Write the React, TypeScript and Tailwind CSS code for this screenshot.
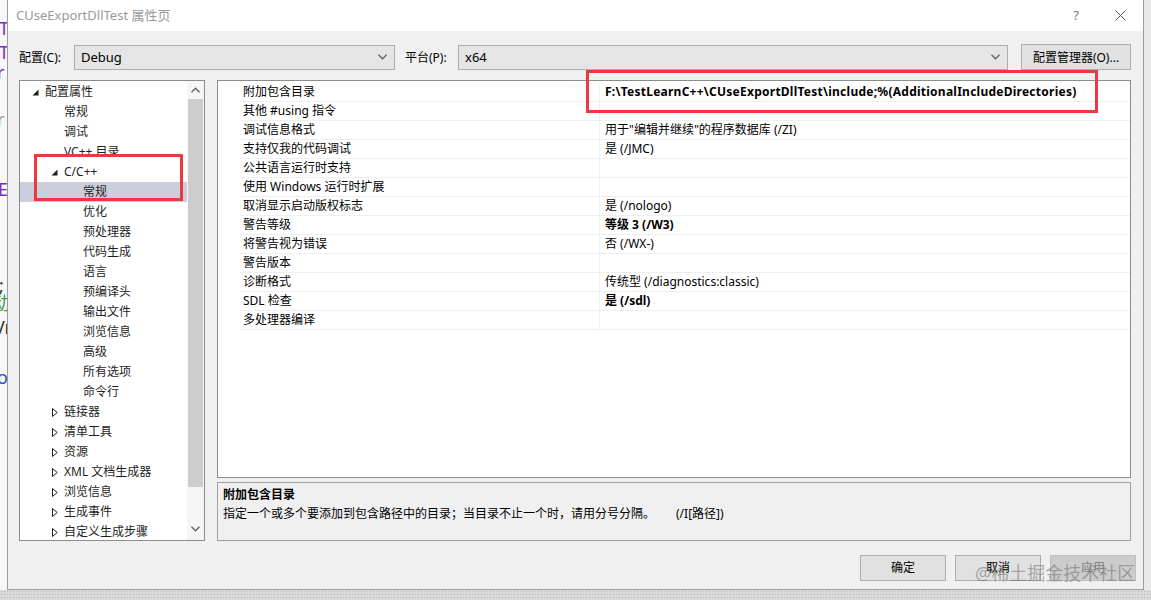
import React from 'react';

const font = "font-['Noto_Sans','Noto_Sans_CJK_SC',sans-serif]";

type TreeItem = { label: string; level: number; arrow?: 'open' | 'closed'; selected?: boolean };

const tree: TreeItem[] = [
  { label: '配置属性', level: 0, arrow: 'open' },
  { label: '常规', level: 1 },
  { label: '调试', level: 1 },
  { label: 'VC++ 目录', level: 1 },
  { label: 'C/C++', level: 1, arrow: 'open' },
  { label: '常规', level: 2, selected: true },
  { label: '优化', level: 2 },
  { label: '预处理器', level: 2 },
  { label: '代码生成', level: 2 },
  { label: '语言', level: 2 },
  { label: '预编译头', level: 2 },
  { label: '输出文件', level: 2 },
  { label: '浏览信息', level: 2 },
  { label: '高级', level: 2 },
  { label: '所有选项', level: 2 },
  { label: '命令行', level: 2 },
  { label: '链接器', level: 1, arrow: 'closed' },
  { label: '清单工具', level: 1, arrow: 'closed' },
  { label: '资源', level: 1, arrow: 'closed' },
  { label: 'XML 文档生成器', level: 1, arrow: 'closed' },
  { label: '浏览信息', level: 1, arrow: 'closed' },
  { label: '生成事件', level: 1, arrow: 'closed' },
  { label: '自定义生成步骤', level: 1, arrow: 'closed' },
];

const props: { name: string; value: string; bold?: boolean }[] = [
  { name: '附加包含目录', value: 'F:\\TestLearnC++\\CUseExportDllTest\\include;%(AdditionalIncludeDirectories)', bold: true },
  { name: '其他 #using 指令', value: '' },
  { name: '调试信息格式', value: '用于"编辑并继续"的程序数据库 (/ZI)' },
  { name: '支持仅我的代码调试', value: '是 (/JMC)' },
  { name: '公共语言运行时支持', value: '' },
  { name: '使用 Windows 运行时扩展', value: '' },
  { name: '取消显示启动版权标志', value: '是 (/nologo)' },
  { name: '警告等级', value: '等级 3 (/W3)', bold: true },
  { name: '将警告视为错误', value: '否 (/WX-)' },
  { name: '警告版本', value: '' },
  { name: '诊断格式', value: '传统型 (/diagnostics:classic)' },
  { name: 'SDL 检查', value: '是 (/sdl)', bold: true },
  { name: '多处理器编译', value: '' },
];

const indent = ['pl-[25px]', 'pl-[44px]', 'pl-[63px]'];

function Chevron({ up }: { up?: boolean }) {
  return (
    <svg width="9" height="6" viewBox="0 0 9 6" className={up ? 'rotate-180' : ''}>
      <path d="M0.5 0.8 L4.5 4.8 L8.5 0.8" fill="none" stroke="#606060" strokeWidth="1.3" />
    </svg>
  );
}

function Arrow({ kind }: { kind: 'open' | 'closed' }) {
  if (kind === 'open') {
    return (
      <svg width="7" height="7" viewBox="0 0 7 7">
        <polygon points="6.5,0.5 6.5,6.5 0.5,6.5" fill="#1e1e1e" />
      </svg>
    );
  }
  return (
    <svg width="6" height="9" viewBox="0 0 6 9">
      <polygon points="0.5,0.5 5.2,4.5 0.5,8.5" fill="none" stroke="#1e1e1e" strokeWidth="1" />
    </svg>
  );
}

function Combo({ value, width }: { value: string; width: string }) {
  return (
    <div className={`${width} h-[25px] bg-[#e5e5e5] border border-[#acacac] flex items-center justify-between pl-[6px] pr-[7px]`}>
      <span className="text-[13px] text-black pt-[1px]">{value}</span>
      <Chevron />
    </div>
  );
}

export default function App() {
  return (
    <div className={`relative w-[1151px] h-[600px] flex flex-col bg-[#e6e6e6] overflow-hidden ${font}`}>
      <div className="flex h-[590px]">
        {/* code editor showing behind the dialog */}
        <div className="relative w-[7px] bg-[#f7f7f7] overflow-hidden text-[18px] leading-none">
          <span className="absolute left-[-1px] top-[19px] text-[#7a2fbf]">T</span>
          <span className="absolute left-[-1px] top-[43px] text-[#7a2fbf]">T</span>
          <span className="absolute left-[-3px] top-[63px] text-[#7a2fbf]">r</span>
          <span className="absolute left-[-3px] top-[110px] text-[#999]">r</span>
          <span className="absolute left-[-2px] top-[180px] text-[#7a2fbf]">E</span>
          <span className="absolute left-[-1px] top-[276px] text-[#333]">;</span>
          <span className="absolute left-[-8px] top-[294px] text-[#3a9a3a]">动</span>
          <span className="absolute left-[-6px] top-[318px] text-[#333]">Vr</span>
          <span className="absolute left-[-3px] top-[368px] text-[#2050c0]">ol</span>
        </div>

        {/* dialog */}
        <div className="w-[1137px] flex flex-col border-x border-b border-[#9c9c9c] shadow-[2px_2px_6px_rgba(0,0,0,0.15)]">
          <div className="h-[31px] bg-white flex items-center pl-[8px] pr-[17px]">
            <span className="text-[13px] text-[#9a9a9a]">CUseExportDllTest 属性页</span>
            <span className="ml-auto text-[13px] text-[#777]">?</span>
            <svg width="11" height="11" viewBox="0 0 11 11" className="ml-[36px]">
              <path d="M0.5 0.5 L10.5 10.5 M10.5 0.5 L0.5 10.5" stroke="#555" strokeWidth="1" />
            </svg>
          </div>

          <div className="flex-1 bg-[#f0f0f0] flex flex-col pl-[11px] pr-[12px] pt-[13px] text-[12px] text-black">
            <div className="flex items-center h-[26px]">
              <span className="w-[55px] text-[12px] pt-[1px]">配置(C):</span>
              <Combo value="Debug" width="w-[321px]" />
              <span className="ml-[10px] w-[53px] pt-[1px]">平台(P):</span>
              <Combo value="x64" width="w-[550px]" />
              <div className="ml-[13px] w-[110px] h-[26px] bg-[#e1e1e1] border border-[#adadad] flex items-center justify-center pt-[1px]">
                配置管理器(O)...
              </div>
            </div>

            <div className="flex mt-[10px] h-[461px] gap-[12px]">
              {/* tree */}
              <div className="w-[186px] h-full bg-white border border-[#8c8c8c] flex overflow-hidden">
                <div className="flex-1 flex flex-col text-[#1e1e1e] pt-[1px]">
                  {tree.map((t, i) => (
                    <div
                      key={i}
                      className={`relative h-[20px] shrink-0 flex items-center ${indent[t.level]} ${t.selected ? 'bg-[#cccedb]' : ''}`}
                    >
                      {t.arrow && (
                        <span className="absolute top-0 h-full flex items-center" style={{ left: 12 + t.level * 19 + (t.arrow === 'closed' ? 1 : 0) }}>
                          <Arrow kind={t.arrow} />
                        </span>
                      )}
                      <span className="whitespace-nowrap">{t.label}</span>
                    </div>
                  ))}
                </div>
                <div className="w-[17px] bg-[#f5f5f5] flex flex-col items-center">
                  <div className="h-[18px] flex items-center">
                    <Chevron up />
                  </div>
                  <div className="w-[15px] h-[388px] bg-[#cdcdcd]" />
                  <div className="flex-1" />
                  <div className="h-[18px] flex items-center mb-[2px]">
                    <Chevron />
                  </div>
                </div>
              </div>

              {/* property grid + description */}
              <div className="w-[914px] flex flex-col gap-[4px]">
                <div className="h-[398px] bg-white border border-[#8c8c8c] pt-[2px]">
                  {props.map((p, i) => (
                    <div key={i} className="flex h-[19px]">
                      <div className="w-[21px]" />
                      <div className="w-[360px] flex items-center pl-[4px] border-b border-[#efefef] whitespace-nowrap">{p.name}</div>
                      <div className={`flex-1 flex items-center pl-[5px] border-b border-l border-[#efefef] whitespace-nowrap ${p.bold ? 'font-bold' : ''} ${i === 0 ? 'tracking-[0.25px]' : ''}`}>
                        {p.value}
                      </div>
                    </div>
                  ))}
                </div>
                <div className="h-[59px] bg-[#f0f0f0] border border-[#a0a0a0] px-[5px] pt-[2px]">
                  <div className="font-bold leading-[19px]">附加包含目录</div>
                  <div className="leading-[19px] whitespace-nowrap">
                    指定一个或多个要添加到包含路径中的目录；当目录不止一个时，请用分号分隔。
                    <span className="ml-[21px]">(/I[路径])</span>
                  </div>
                </div>
              </div>
            </div>

            <div className="flex justify-end mt-[14px] -mr-[5px] gap-[9px]">
              <div className="w-[86px] h-[26px] bg-[#e1e1e1] border border-[#adadad] flex items-center justify-center">确定</div>
              <div className="w-[86px] h-[26px] bg-[#e1e1e1] border border-[#adadad] flex items-center justify-center">取消</div>
              <div className="w-[86px] h-[26px] bg-[#cccccc] border border-[#bfbfbf] flex items-center justify-center text-[#838383]">应用</div>
            </div>
          </div>
        </div>
        <div className="flex-1 bg-[#e9e9e9]" />
      </div>
      <div className="h-[10px] bg-[#d9d9d9] bg-[radial-gradient(#b8b8b8_0.7px,transparent_0.8px)] bg-[length:3px_3px]" />

      {/* red annotation boxes */}
      <div className="absolute left-[34px] top-[154px] w-[149px] h-[47px] border-[3px] border-[#ea3a40]" />
      <div className="absolute left-[586px] top-[70px] w-[512px] h-[43px] border-[3px] border-[#ea3a40]" />

      {/* watermark */}
      <div className="absolute left-[975px] top-[560px] text-[18px] text-[rgba(110,110,110,0.55)] whitespace-nowrap">@稀土掘金技术社区</div>
    </div>
  );
}
